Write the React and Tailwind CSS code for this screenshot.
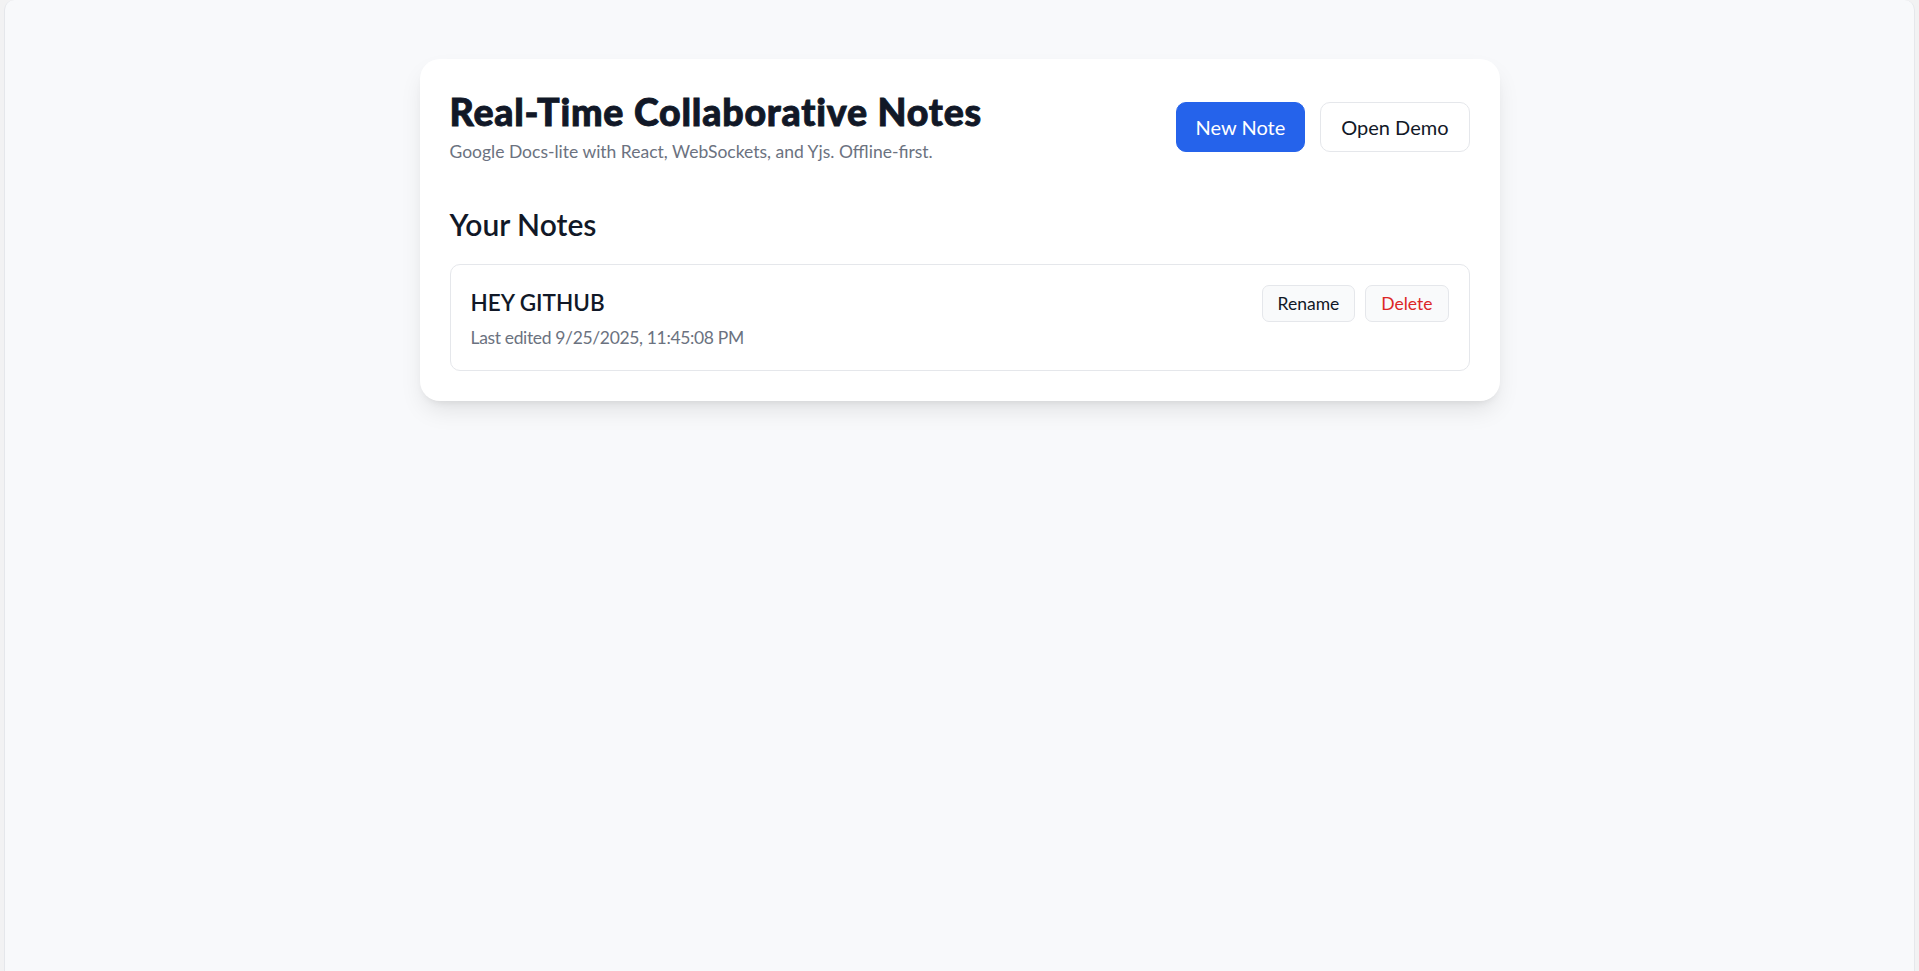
import React, { useState } from "react";

// A single saved note, as the list shows it.
const initialNotes = [
  { id: "n1", title: "HEY GITHUB", updatedAt: "9/25/2025, 11:45:08 PM" },
];

const NoteRow = ({ note }) => (
  <div className="flex items-start justify-between rounded-[10px] border border-[#e5e7eb] bg-white p-5">
    <div>
      <div className="text-[22.5px] font-semibold leading-[35px] text-[#111827]">{note.title}</div>
      <div className="mt-[5px] text-[17.5px] leading-[25px] tracking-[-0.35px] text-[#6b7280]">
        Last edited {note.updatedAt}
      </div>
    </div>
    <div className="flex gap-[10px]">
      <button className="rounded-[7px] border border-[#e5e7eb] bg-[#f9fafb] px-[15px] py-[5px] text-[17.5px] leading-[25px] text-[#111827]">
        Rename
      </button>
      <button className="rounded-[7px] border border-[#e5e7eb] bg-[#f9fafb] px-[15px] py-[5px] text-[17.5px] leading-[25px] text-[#dc2626]">
        Delete
      </button>
    </div>
  </div>
);

export default function App() {
  const [notes] = useState(initialNotes);

  return (
    <div
      className="h-screen bg-[#f2f2f3] px-[4px]"
      style={{ fontFamily: "Lato, 'Noto Sans', sans-serif" }}
    >
      <div className="h-full rounded-t-[10px] border-x border-[#e5e7eb] bg-[#f8f9fb] pt-[59px]">
        <div className="mx-auto w-[1080px] rounded-[20px] bg-white p-[30px] shadow-[0_12px_24px_-4px_rgba(0,0,0,0.1),0_5px_8px_-5px_rgba(0,0,0,0.1)]">
          {/* Header */}
          <div className="flex items-center justify-between">
            <div>
              <h1 className="text-[37.5px] font-black leading-[45px] tracking-[0.8px] text-[#111827] [-webkit-text-stroke:0.9px_#111827]">
                Real-Time Collaborative Notes
              </h1>
              <p className="mt-[5px] text-[17.5px] leading-[25px] text-[#6b7280]">
                Google Docs-lite with React, WebSockets, and Yjs. Offline-first.
              </p>
            </div>
            <div className="flex gap-[15px]">
              <button className="rounded-[10px] border border-[#2563eb] bg-[#2563eb] px-[19px] py-[9px] text-[20px] leading-[30px] text-white">
                New Note
              </button>
              <button className="rounded-[10px] border border-[#e5e7eb] bg-white px-5 py-[9px] text-[20px] leading-[30px] text-[#111827]">
                Open Demo
              </button>
            </div>
          </div>

          {/* Notes list */}
          <h2 className="mt-10 mb-5 text-[30px] font-semibold leading-[40px] text-[#111827]">
            Your Notes
          </h2>
          <div className="flex flex-col gap-[15px]">
            {notes.map((note) => (
              <NoteRow key={note.id} note={note} />
            ))}
          </div>
        </div>
      </div>
    </div>
  );
}
